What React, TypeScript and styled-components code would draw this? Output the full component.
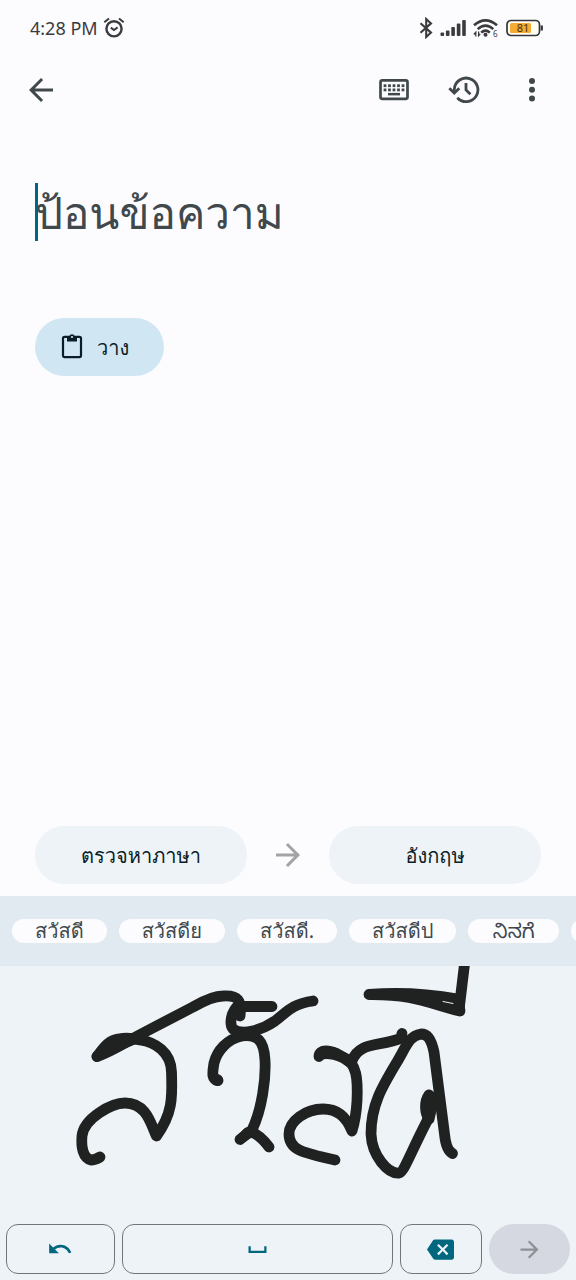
import React from "react";
import styled, { createGlobalStyle } from "styled-components";
import { MdArrowBack, MdArrowForward, MdBackspace, MdSpaceBar, MdUndo } from "react-icons/md";

const GlobalStyle = createGlobalStyle`
  *, *::before, *::after { box-sizing: border-box; }
  body { margin: 0; background: #fcfcff; }
  button, textarea { font: inherit; }
  svg { display: block; flex: none; }
`;

const Screen = styled.div`
  display: flex;
  flex-direction: column;
  min-height: 100vh;
  background: #fcfcff;
  color: #40484c;
  font-family: "Noto Sans", "Loma", "Noto Sans Kannada", sans-serif;
`;

const StatusBar = styled.header`
  display: flex;
  align-items: center;
  justify-content: space-between;
  height: 56px;
  padding: 0 32px 0 30px;
  font-size: 18px;
  line-height: 24px;
  color: #3b3b3e;
`;

const StatusGroup = styled.div<{ $gap: number }>`
  display: flex;
  align-items: center;
  gap: ${(p) => p.$gap}px;
`;

const AppBar = styled.nav`
  display: flex;
  align-items: center;
  gap: 22px;
  height: 68px;
  padding: 0 22px 0 17px;
`;

const IconButton = styled.button`
  display: flex;
  align-items: center;
  justify-content: center;
  width: 48px;
  height: 48px;
  padding: 0;
  border: 0;
  border-radius: 24px;
  background: none;
  color: #40484c;

  &:first-child { margin-right: auto; }
  &:last-child { width: 44px; }
`;

const Editor = styled.main`
  display: flex;
  flex: 1;
  flex-direction: column;
  align-items: flex-start;
  padding: 56px 35px 24px;
`;

const Field = styled.label`
  position: relative;
  display: block;
  width: 100%;
  margin-bottom: 74px;
`;

const SourceText = styled.textarea`
  display: block;
  width: 100%;
  height: 64px;
  padding: 0;
  border: 0;
  outline: 0;
  resize: none;
  overflow: hidden;
  background: none;
  color: #191c1e;
  caret-color: transparent;
  font-size: 44px;
  line-height: 64px;

  &::placeholder { color: #40484c; opacity: 1; }
`;

const Caret = styled.span`
  position: absolute;
  top: 3px;
  left: 0;
  width: 3px;
  height: 58px;
  background: #00677f;
`;

const PasteButton = styled.button`
  display: flex;
  align-items: center;
  gap: 14px;
  height: 58px;
  padding: 2px 35px 0 26px;
  border: 0;
  border-radius: 29px;
  background: #d0e6f3;
  color: #0b1d26;
  font-size: 20px;
  line-height: 28px;
`;

const LanguageRow = styled.div`
  display: flex;
  align-items: center;
  padding: 0 35px 12px;
  color: #a2a3a6;
`;

const LanguageButton = styled.button`
  flex: 1;
  height: 58px;
  padding: 2px 0 0;
  border: 0;
  border-radius: 29px;
  background: #eef3f7;
  color: #0b1d26;
  font-size: 20px;
  line-height: 28px;
`;

const Direction = styled.span`
  display: flex;
  justify-content: center;
  width: 82px;
`;

const Candidates = styled.div`
  display: flex;
  align-items: center;
  gap: 12px;
  height: 70px;
  padding: 0 12px;
  overflow: hidden;
  background: #e0eaf0;
`;

const Candidate = styled.button`
  flex: none;
  min-width: 91px;
  height: 24px;
  padding: 0 23px;
  border: 0;
  border-radius: 12px;
  background: #fcfcff;
  color: #40484c;
  font-size: 20px;
  line-height: 24px;
  white-space: nowrap;
`;

const Keyboard = styled.section`
  background: #eef3f8;
`;

const Ink = styled.svg`
  width: 100%;
  height: auto;
  color: #1f2221;
`;

const Keys = styled.div`
  display: grid;
  grid-template-columns: 4fr 10fr 3fr 3fr;
  gap: 7px;
  padding: 8px 6px 6px;
`;

const Key = styled.button<{ $muted?: boolean }>`
  display: flex;
  align-items: center;
  justify-content: center;
  height: 50px;
  padding: 0;
  border: ${(p) => (p.$muted ? "0" : "1px solid #70777c")};
  border-radius: ${(p) => (p.$muted ? 25 : 12)}px;
  background: ${(p) => (p.$muted ? "#d6d8e1" : "transparent")};
  color: ${(p) => (p.$muted ? "#8d9095" : "#00677f")};
`;

const AlarmIcon = () => (
  <svg width="22" height="22" viewBox="0 0 22 22" fill="none" stroke="currentColor" strokeWidth="2.4">
    <circle cx="11" cy="11.8" r="7.6" />
    <path d="M7.8 10.6 11 13l3.6-2.6" strokeWidth="2" />
    <path d="M1.3 5.2 6 1.5M20.7 5.2 16 1.5" strokeWidth="2" />
  </svg>
);

const BluetoothIcon = () => (
  <svg width="14" height="22" viewBox="0 0 14 22" fill="none" stroke="currentColor" strokeWidth="2.1">
    <path d="M1.5 6.2 12 15.6 7.2 20V2L12 6.4 1.5 15.8" />
  </svg>
);

const SignalIcon = () => (
  <svg width="26" height="18" viewBox="0 0 26 18" fill="currentColor">
    <rect x="0.5" y="13.5" width="3.6" height="3.5" rx="1" />
    <rect x="5.9" y="11.5" width="3.6" height="5.5" rx="1" />
    <rect x="11.3" y="8" width="3.6" height="9" rx="1" />
    <rect x="16.8" y="4.5" width="3.6" height="12.5" rx="1" />
    <rect x="22.2" y="1" width="3.6" height="16" rx="1" />
  </svg>
);

const WifiIcon = () => (
  <svg width="26" height="20" viewBox="0 0 26 20" fill="none" stroke="currentColor" strokeWidth="2.6">
    <path d="M1 7.3Q12.5-2.6 24 7.3" />
    <path d="M4.7 11.1Q12.5 4.2 20.3 11.1" />
    <path d="M8.2 14.6Q12.5 10.8 16.8 14.6" />
    <circle cx="12.5" cy="16.8" r="2" fill="currentColor" stroke="none" />
    <path d="M2.8 18.5v-4.2L.8 16.5M5.6 13.5v4.3l1.6-1.9" strokeWidth="1.3" />
    <text x="20" y="19" fontSize="8" fill="currentColor" stroke="none">6</text>
  </svg>
);

const BatteryIcon = () => (
  <svg width="38" height="18" viewBox="0 0 38 18">
    <rect x="1" y="1.5" width="32.5" height="15" rx="4" fill="#fffdf4" stroke="#333538" strokeWidth="1.7" />
    <rect x="4" y="4" width="21" height="10" rx="1.5" fill="#f4ab34" />
    <path d="M35.8 6.5v5" stroke="#333538" strokeWidth="2.2" />
    <text x="17" y="13" textAnchor="middle" fontSize="11" fill="#4c3208">81</text>
  </svg>
);

const KeyboardIcon = () => (
  <svg width="30" height="24" viewBox="0 0 30 24" fill="currentColor">
    <rect x="1.5" y="2.4" width="27" height="18.4" rx="1.8" fill="none" stroke="currentColor" strokeWidth="2.7" />
    {[0, 1, 2, 3, 4].map((column) => (
      <React.Fragment key={column}>
        <rect x={4.6 + column * 4.5} y="6.3" width="2.8" height="2.8" />
        <rect x={4.6 + column * 4.5} y="10.5" width="2.8" height="2.8" />
      </React.Fragment>
    ))}
    <rect x="9" y="14.9" width="12" height="2.5" />
  </svg>
);

const HistoryIcon = () => (
  <svg width="32" height="30" viewBox="0 0 32 30" fill="none" stroke="currentColor" strokeWidth="2.8">
    <path d="M6.3 17V14.5a11.8 11.8 0 1 1 3 8.2" />
    <path d="m1.3 13.3 5 4.8 5-4.8" />
    <path d="M18 8.1v6.8l4.4 4.4" />
  </svg>
);

const MoreIcon = () => (
  <svg width="8" height="26" viewBox="0 0 8 26" fill="currentColor">
    <circle cx="4" cy="4" r="3" />
    <circle cx="4" cy="12.8" r="3" />
    <circle cx="4" cy="21.6" r="3" />
  </svg>
);

const PasteIcon = () => (
  <svg width="22" height="28" viewBox="0 0 22 28" fill="none" stroke="currentColor" strokeWidth="2.2">
    <rect x="2" y="2.8" width="18" height="20.3" rx="1.5" />
    <path d="M6 2.5h2.2a2.9 2.9 0 0 1 5.6 0H16v5H6z" fill="currentColor" stroke="none" />
    <circle cx="11" cy="3" r="1.1" fill="#d0e6f3" stroke="none" />
  </svg>
);

const Handwriting = () => (
  <Ink viewBox="0 0 576 250" role="img" aria-label="สวัสดี" fill="none" stroke="currentColor" strokeWidth="10.8" strokeLinecap="round" strokeLinejoin="round">
    <path d="M97 90.5C103 83 108 74 119 73Q128 71 140 74C155 76 171 86 171.500 106C172 128 174 146 156.500 170C151 159 147 137 125 137C112 137 84 152 82 170C81 181 83 192 91 194Q95 194 100 191" />
    <path d="M97 90.5C111 86 129 74 145 66L193 41Q212 30 223 30C238 29 242 34 240 50" />
    <path d="M97 90.5 108 77 119 73 142 73 120 82Z" fill="currentColor" strokeWidth="5" />
    <path d="M243 40.5H272M239 39C231 45 229 58 233 63C242 70 262 64 275 55C286 47 291 38 313 35" />
    <path d="M218 114.500C212 113 212 109 214 97C217 85 227 73 242 70C257 68 264 74 265 94C266 113 262 143 252 164L240 173.500M251 166Q259 168 269 181" />
    <circle cx="217" cy="114" r="6" fill="currentColor" stroke="none" />
    <path d="M240 173.500 247 166 252 166Z" fill="currentColor" strokeWidth="9" />
    <path d="M319 90.500C319 83 330 83 343 91C357 97 358 113 357 135Q356 152 352 165C346 150 337 143 323 143C306 143 289 155 289 168C289 185 305 187 335 194" />
    <path d="M319 90C326 85 342 90 350 97L336 87 325 86Z" fill="currentColor" strokeWidth="10" />
    <path d="M352 95C359 75 381 81 401 72L402 67.5" />
    <path d="M452.500 187.500Q446 184 444.500 168L434 86C431 72 427 68 421 68C409 70 407 79 397 96C382 121 371 139 371 168C372 190 388 208 399 207C404 206 409 190 427 155L430 147" />
    <path d="M429 129C424 136 425 147 429 153L433 134Z" fill="currentColor" strokeWidth="11" />
    <path d="M369 28.500Q412 25 458 33L460 45C430 38 415 28 369 28.500" />
    <path d="M369 28.500Q412 26 442 33L441 40Q410 29 369 28.500Z" fill="currentColor" stroke="none" />
    <path d="M459 44 465-6" />
    <path d="M443 35.500 453 37.500" stroke="#eef3f8" strokeWidth="1" />
  </Ink>
);

const words = ["สวัสดี", "สวัสดีย", "สวัสดี.", "สวัสดีป", "ನಿನಗೆ"];

export default function App() {
  return (
    <Screen>
      <GlobalStyle />
      <StatusBar>
        <StatusGroup $gap={5}>
          <time>4:28 PM</time>
          <AlarmIcon />
        </StatusGroup>
        <StatusGroup $gap={7}>
          <BluetoothIcon />
          <SignalIcon />
          <WifiIcon />
          <BatteryIcon />
        </StatusGroup>
      </StatusBar>
      <AppBar>
        <IconButton aria-label="กลับ"><MdArrowBack size={36} /></IconButton>
        <IconButton aria-label="แป้นพิมพ์"><KeyboardIcon /></IconButton>
        <IconButton aria-label="ประวัติ"><HistoryIcon /></IconButton>
        <IconButton aria-label="เพิ่มเติม"><MoreIcon /></IconButton>
      </AppBar>
      <Editor>
        <Field>
          <SourceText aria-label="ข้อความต้นฉบับ" placeholder="ป้อนข้อความ" />
          <Caret />
        </Field>
        <PasteButton><PasteIcon />วาง</PasteButton>
      </Editor>
      <LanguageRow>
        <LanguageButton>ตรวจหาภาษา</LanguageButton>
        <Direction><MdArrowForward size={36} /></Direction>
        <LanguageButton>อังกฤษ</LanguageButton>
      </LanguageRow>
      <Candidates>
        {words.map((word) => <Candidate key={word}>{word}</Candidate>)}
        <Candidate aria-label="คำแนะนำเพิ่มเติม" />
      </Candidates>
      <Keyboard>
        <Handwriting />
        <Keys>
          <Key aria-label="เลิกทำ"><MdUndo size={26} /></Key>
          <Key aria-label="เว้นวรรค"><MdSpaceBar size={27} /></Key>
          <Key aria-label="ลบ"><MdBackspace size={27} /></Key>
          <Key $muted aria-label="ถัดไป"><MdArrowForward size={27} /></Key>
        </Keys>
      </Keyboard>
    </Screen>
  );
}
